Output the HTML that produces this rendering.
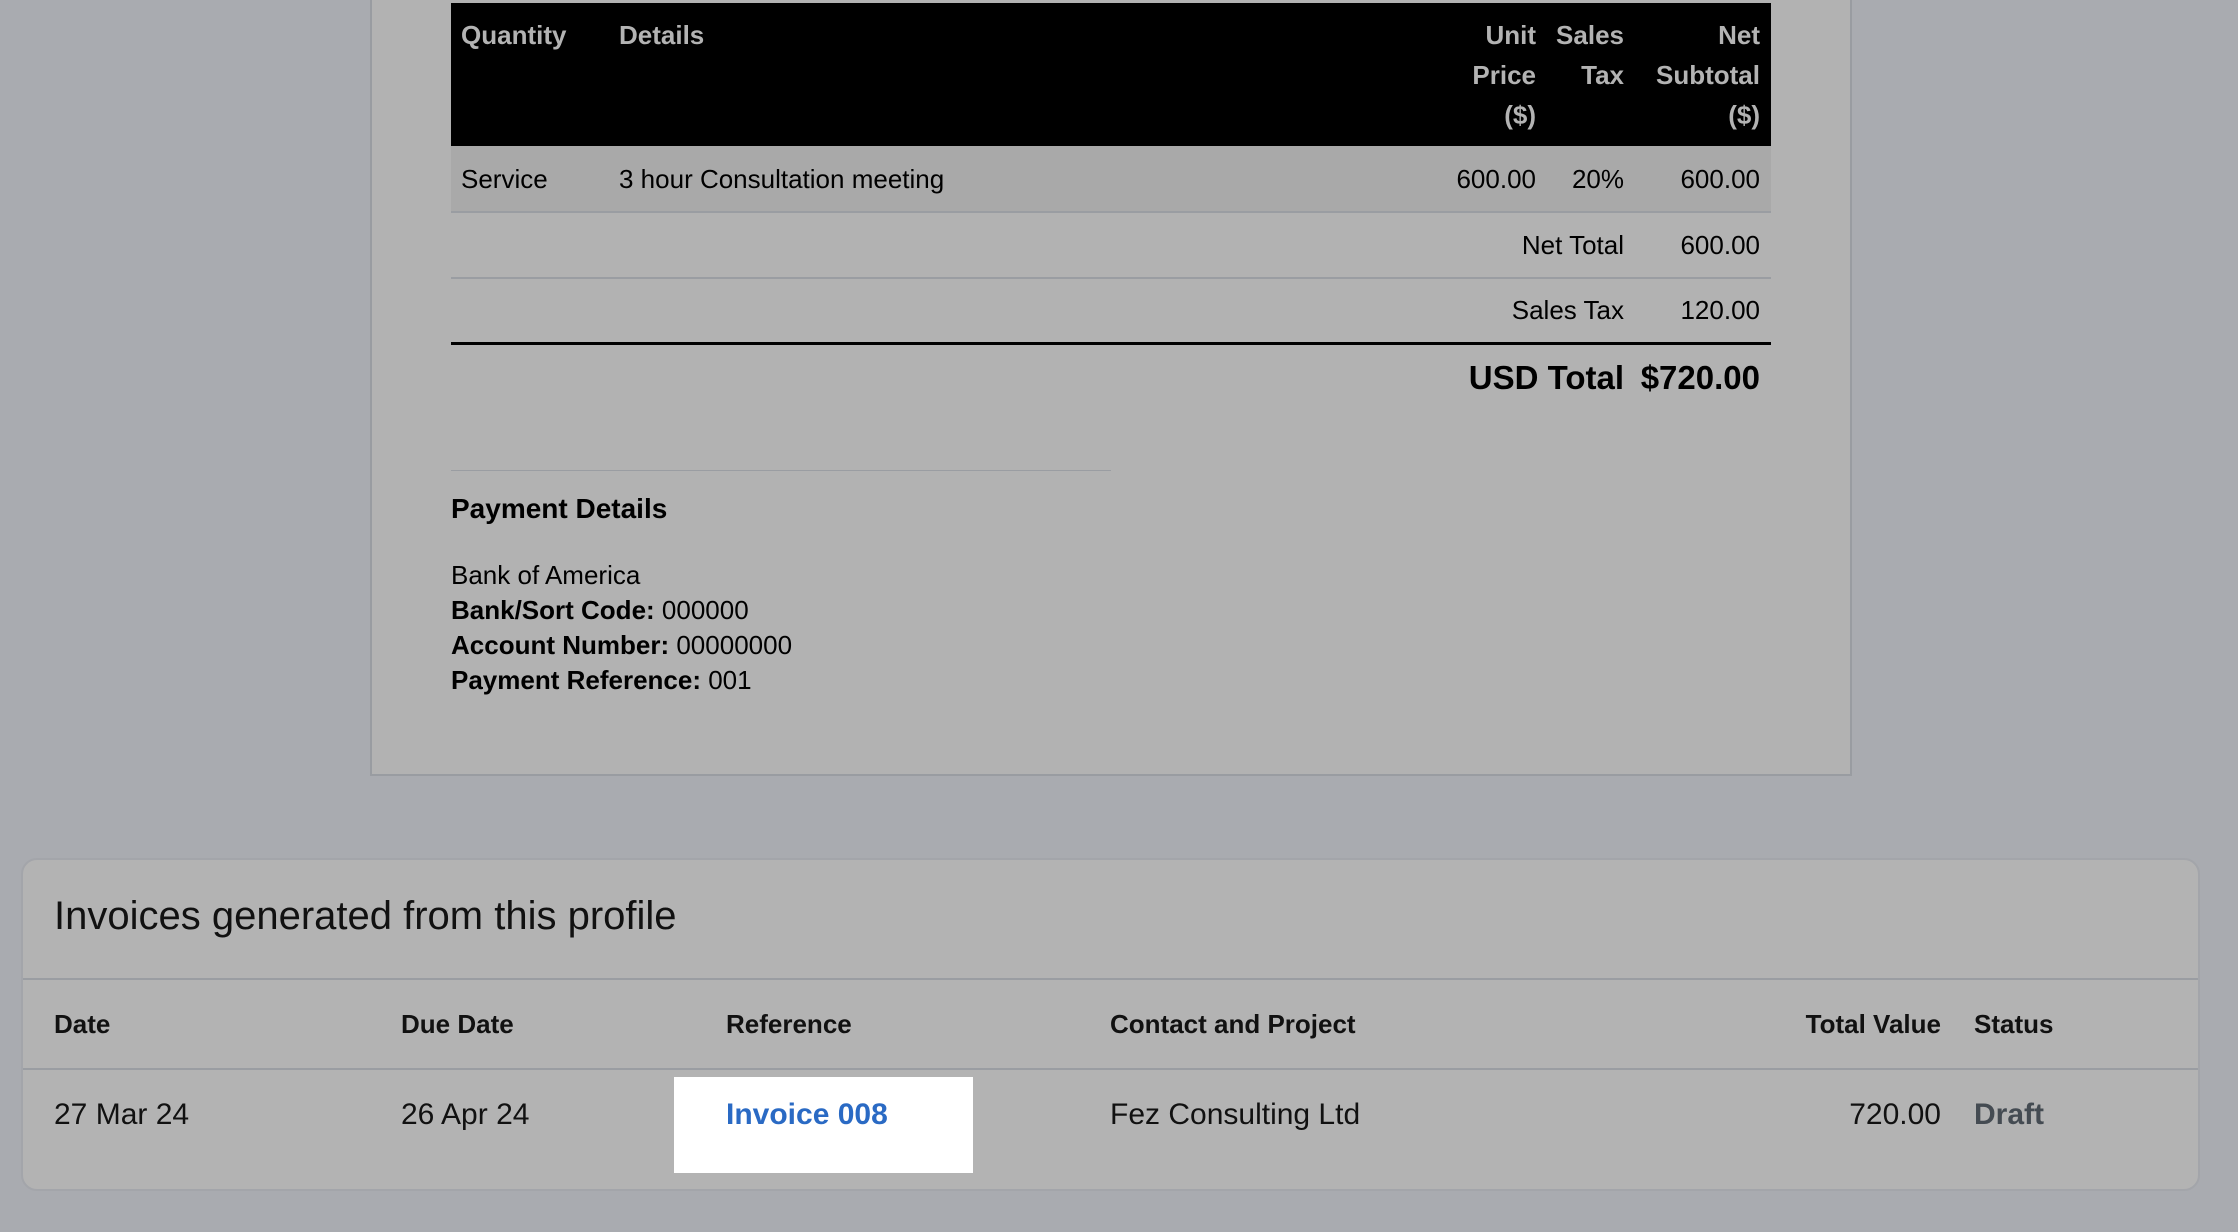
<!DOCTYPE html>
<html><head><meta charset="utf-8"><style>
*{margin:0;padding:0;box-sizing:border-box}
body{width:2238px;height:1232px;background:#a9abb0;font-family:"Liberation Sans",Arial,sans-serif;position:relative;overflow:hidden;color:#000}
.a{position:absolute;white-space:nowrap}
.paper{position:absolute;left:370px;top:-4px;width:1482px;height:780px;background:#b2b2b2;border:2px solid #999ca1;border-top:none}
.hdr{position:absolute;left:451px;top:3px;width:1320px;height:143px;background:#000}
.h{color:#b3b3b3;font-weight:bold;font-size:26px;line-height:40px}
.t{font-size:26px;line-height:30px}
.card{position:absolute;left:21px;top:858px;width:2179px;height:333px;background:#b3b3b3;border:2px solid #a3a5aa;border-radius:16px}
.line{position:absolute;height:2px;background:#9a9da2}
</style></head><body>
<div class="paper"></div>
<div class="hdr"></div>
<div class="a h" style="left:461px;top:15px">Quantity</div>
<div class="a h" style="left:619px;top:15px">Details</div>
<div class="a h" style="right:702px;top:15px;text-align:right">Unit<br>Price<br>($)</div>
<div class="a h" style="right:614px;top:15px;text-align:right">Sales<br>Tax</div>
<div class="a h" style="right:478px;top:15px;text-align:right">Net<br>Subtotal<br>($)</div>
<div class="a" style="left:451px;top:146px;width:1320px;height:65px;background:#a9a9a9"></div>
<div class="a t" style="left:461px;top:164px">Service</div>
<div class="a t" style="left:619px;top:164px">3 hour Consultation meeting</div>
<div class="a t" style="right:702px;top:164px">600.00</div>
<div class="a t" style="right:614px;top:164px">20%</div>
<div class="a t" style="right:478px;top:164px">600.00</div>
<div class="line" style="left:451px;top:211px;width:1320px"></div>
<div class="a t" style="right:614px;top:230px">Net Total</div>
<div class="a t" style="right:478px;top:230px">600.00</div>
<div class="line" style="left:451px;top:277px;width:1320px"></div>
<div class="a t" style="right:614px;top:295px">Sales Tax</div>
<div class="a t" style="right:478px;top:295px">120.00</div>
<div class="a" style="left:451px;top:342px;width:1320px;height:3px;background:#000"></div>
<div class="a" style="right:614px;top:359px;font-size:33px;font-weight:bold">USD Total</div>
<div class="a" style="right:478px;top:359px;font-size:33px;font-weight:bold">$720.00</div>
<div class="line" style="left:451px;top:470px;width:660px;height:1px"></div>
<div class="a" style="left:451px;top:493px;font-size:28px;font-weight:bold">Payment Details</div>
<div class="a" style="left:451px;top:558px;font-size:26px;line-height:35px">Bank of America<br><b>Bank/Sort Code:</b> 000000<br><b>Account Number:</b> 00000000<br><b>Payment Reference:</b> 001</div>
<div class="card"></div>
<div class="a" style="left:54px;top:894px;font-size:40px;color:#111">Invoices generated from this profile</div>
<div class="line" style="left:23px;top:978px;width:2175px"></div>
<div class="a" style="left:54px;top:1009px;font-size:26px;font-weight:bold;color:#111">Date</div>
<div class="a" style="left:401px;top:1009px;font-size:26px;font-weight:bold;color:#111">Due Date</div>
<div class="a" style="left:726px;top:1009px;font-size:26px;font-weight:bold;color:#111">Reference</div>
<div class="a" style="left:1110px;top:1009px;font-size:26px;font-weight:bold;color:#111">Contact and Project</div>
<div class="a" style="right:297px;top:1009px;font-size:26px;font-weight:bold;color:#111">Total Value</div>
<div class="a" style="left:1974px;top:1009px;font-size:26px;font-weight:bold;color:#111">Status</div>
<div class="line" style="left:23px;top:1068px;width:2175px"></div>
<div class="a" style="left:674px;top:1077px;width:299px;height:96px;background:#fff"></div>
<div class="a" style="left:54px;top:1098px;font-size:30px;color:#111">27 Mar 24</div>
<div class="a" style="left:401px;top:1098px;font-size:30px;color:#111">26 Apr 24</div>
<div class="a" style="left:726px;top:1098px;font-size:30px;color:#2a6ac4;font-weight:bold">Invoice 008</div>
<div class="a" style="left:1110px;top:1098px;font-size:30px;color:#111">Fez Consulting Ltd</div>
<div class="a" style="right:297px;top:1098px;font-size:30px;color:#111">720.00</div>
<div class="a" style="left:1974px;top:1098px;font-size:30px;color:#444b52;font-weight:bold">Draft</div>
</body></html>
